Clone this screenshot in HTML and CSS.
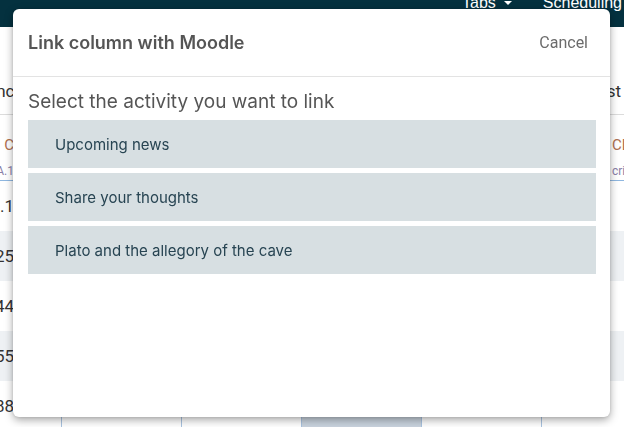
FILE: index.html
```html
<!DOCTYPE html>
<html>
<head>
<meta charset="utf-8">
<link rel="stylesheet" href="styles.css">
</head>
<body>
<nav class="nav">
  <span class="nav-item">Tabs <span class="caret"></span></span>
  <span class="nav-item">Scheduling</span>
</nav>
<div class="toolbar">
  <span class="tb-left">Sync</span>
  <span class="tb-right">Last</span>
</div>
<div class="grid">
  <div class="ghead">
    <div class="hcell first"><span class="h1">C</span><span class="h2">A.1</span></div>
    <div class="hcell"></div>
    <div class="hcell"></div>
    <div class="hcell"></div>
    <div class="hcell"></div>
    <div class="hcell last"><span class="h1">CD</span><span class="h2">cri</span></div>
  </div>
  <div class="grow"><div class="cell first">9.1</div><div class="cell"></div><div class="cell"></div><div class="cell"></div><div class="cell"></div><div class="cell"></div></div>
  <div class="grow alt"><div class="cell first">9.25</div><div class="cell"></div><div class="cell"></div><div class="cell"></div><div class="cell"></div><div class="cell"></div></div>
  <div class="grow"><div class="cell first">8.44</div><div class="cell"></div><div class="cell"></div><div class="cell"></div><div class="cell"></div><div class="cell"></div></div>
  <div class="grow alt"><div class="cell first">7.55</div><div class="cell"></div><div class="cell"></div><div class="cell"></div><div class="cell"></div><div class="cell"></div></div>
  <div class="grow"><div class="cell first">6.88</div><div class="cell"></div><div class="cell"></div><div class="cell sel"></div><div class="cell">'</div><div class="cell"></div></div>
</div>

<div class="modal">
  <div class="modal-header">
    <h2 class="modal-title">Link column with Moodle</h2>
    <button class="cancel">Cancel</button>
  </div>
  <div class="modal-body">
    <p class="prompt">Select the activity you want to link</p>
    <ul class="activities">
      <li class="activity">Upcoming news</li>
      <li class="activity">Share your thoughts</li>
      <li class="activity">Plato and the allegory of the cave</li>
    </ul>
  </div>
</div>
</body>
</html>
```

FILE: styles.css
```css
* { box-sizing: border-box; }
html, body { margin: 0; padding: 0; }
body {
  width: 624px;
  height: 427px;
  overflow: hidden;
  background: #ffffff;
  font-family: Roboto, "Liberation Sans", sans-serif;
  color: #333;
}
.nav {
  height: 27px;
  background: #04313f;
  display: flex;
  justify-content: flex-end;
  align-items: flex-start;
  gap: 31px;
  padding-right: 2px;
  overflow: hidden;
}
.nav-item {
  color: #ffffff;
  font-family: "Liberation Sans", Arial, sans-serif;
  font-size: 16px;
  line-height: 16px;
  margin-top: -5px;
  display: flex;
  align-items: center;
  gap: 8px;
}
.caret {
  width: 0; height: 0;
  border-left: 4px solid transparent;
  border-right: 4px solid transparent;
  border-top: 4px solid #fff;
}
.toolbar {
  height: 88px;
  display: flex;
  justify-content: space-between;
  align-items: flex-start;
  padding-top: 54px;
  border-bottom: 1px solid #dcdcdc;
  font-size: 17px;
  color: #333;
}
.tb-left { margin-left: -22px; }
.tb-right { margin-right: 3px; }
.grid { margin-left: -59px; width: 740px; }
.ghead {
  display: flex;
  height: 66px;
  border-bottom: 1px solid #8fb7e0;
}
.hcell {
  width: 120px;
  display: flex;
  flex-direction: column;
  align-items: flex-end;
  padding: 21px 4px 0 0;
}
.hcell.first { padding-right: 47px; }
.hcell.last { align-items: flex-start; padding-left: 71px; }
.h1 { color: #b07050; font-size: 15px; line-height: 18px; }
.h2 { color: #8a80a8; font-size: 12px; line-height: 20px; margin-top: 7px; }
.grow {
  display: flex;
  height: 50px;
}
.grow.alt { background: #eef1f4; }
.cell {
  width: 120px;
  border-left: 1px solid #a9c3e0;
  display: flex;
  align-items: center;
  justify-content: flex-end;
  padding-right: 47px;
  font-size: 17px;
  color: #444;
}
.cell.first { border-left: none; color: #333; }
.grow:first-of-type .cell.first { color: #3a6fb0; }
.cell.sel { background: #c9d3de; }

.modal {
  position: fixed;
  left: 13px;
  top: 9px;
  width: 597px;
  height: 408px;
  background: #ffffff;
  border-radius: 6px;
  box-shadow: 0 3px 8px rgba(0,0,0,0.35), 0 0 3px rgba(0,0,0,0.12);
  display: flex;
  flex-direction: column;
}
.modal-header {
  height: 68px;
  display: flex;
  align-items: center;
  justify-content: space-between;
  padding: 0 22px 0 15px;
  border-bottom: 1px solid #e3e3e3;
}
.modal-title {
  margin: 0;
  font-family: Inter, "Noto Sans", sans-serif;
  font-size: 18px;
  font-weight: 600;
  color: #555555;
}
.cancel {
  border: none;
  background: none;
  padding: 0;
  font-family: Roboto, "Liberation Sans", sans-serif;
  font-size: 16px;
  color: #6b6b6b;
}
.modal-body {
  padding: 15px 14px 0 15px;
}
.prompt {
  margin: 0 0 8px 0;
  font-family: Inter, "Noto Sans", sans-serif;
  font-size: 19px;
  line-height: 20px;
  color: #555555;
}
.activities {
  list-style: none;
  margin: 0;
  padding: 0;
  display: flex;
  flex-direction: column;
  gap: 5px;
}
.activity {
  height: 48px;
  background: #d7dfe2;
  display: flex;
  align-items: center;
  padding-left: 27px;
  font-family: Inter, "Noto Sans", sans-serif;
  font-size: 15px;
  color: #274452;
}
```
